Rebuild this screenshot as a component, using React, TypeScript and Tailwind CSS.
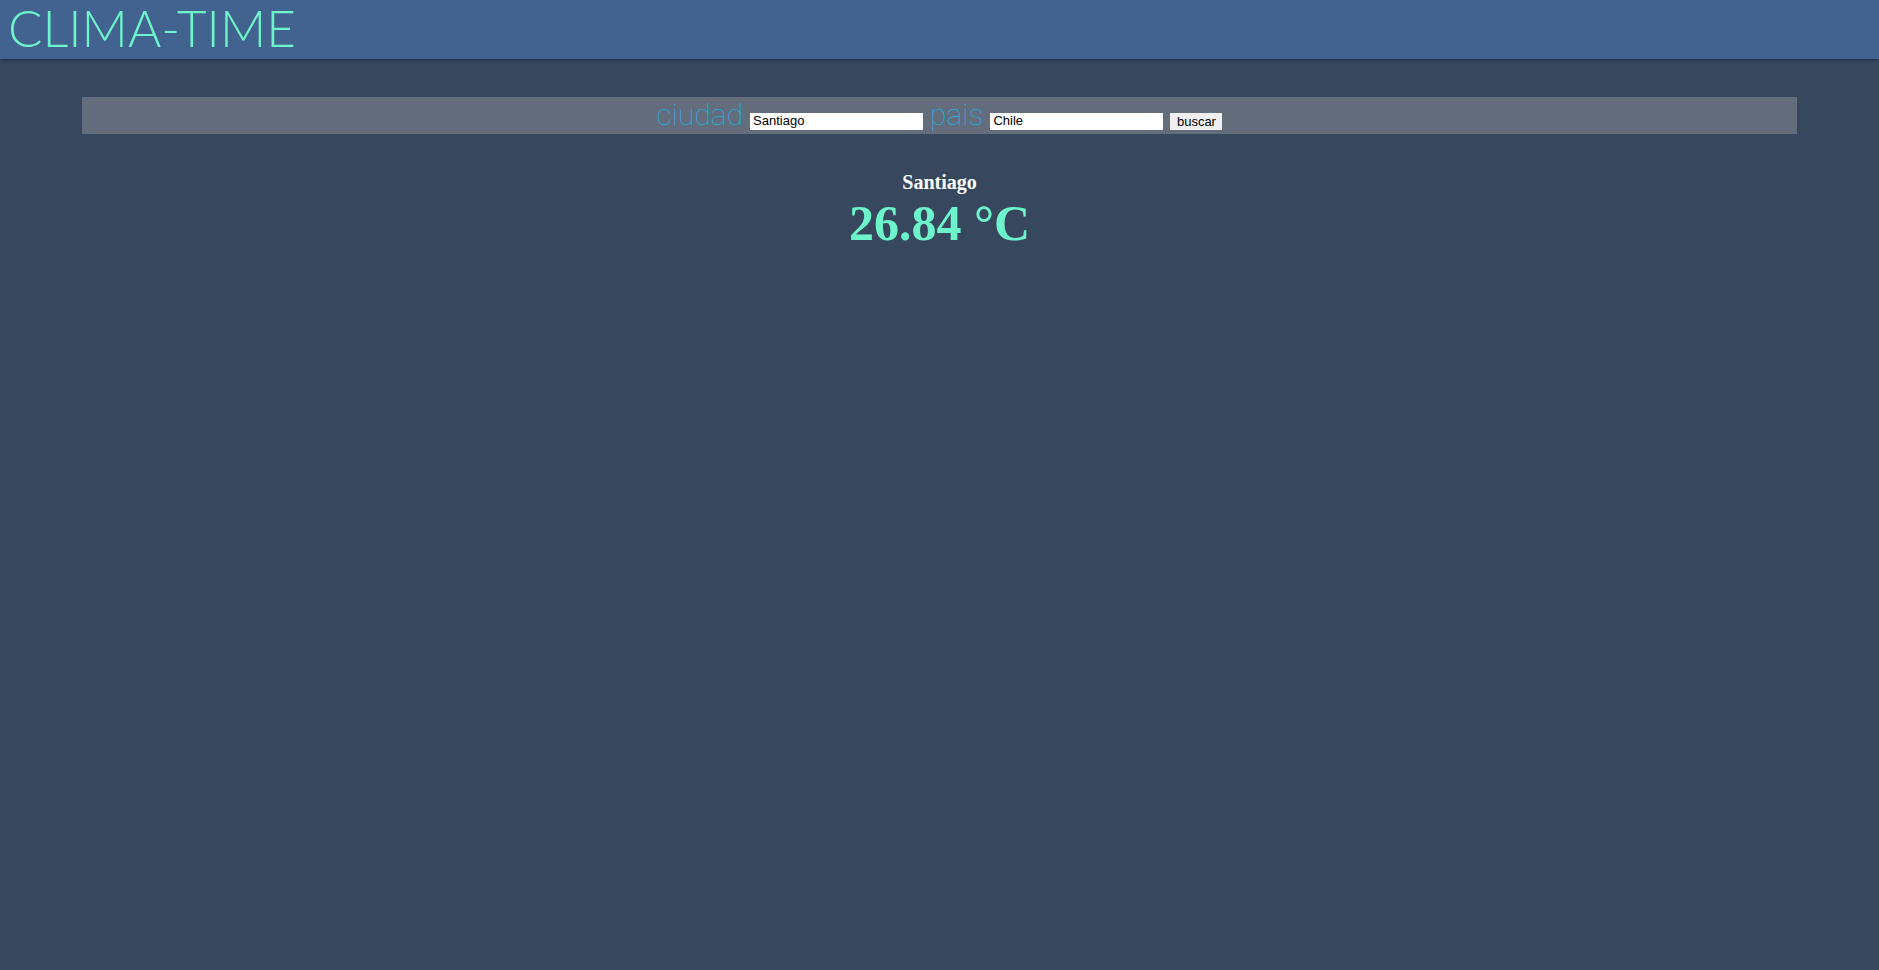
import React from "react"

export default function App() {
  return (
    <div className="min-h-[970px] bg-[#37475e]">
      <header className="h-[59px] bg-[#42628f] shadow-[0_1px_3px_rgba(0,0,0,0.35)]">
        <h1 className="pl-[8px] text-[51px] leading-[56px] font-light text-[#6ef4ca] [font-family:Lato,'Open_Sans',sans-serif]">
          CLIMA-TIME
        </h1>
      </header>

      <main className="px-[82px] pt-[38px]">
        <form
          className="flex h-[37px] items-center justify-center gap-[7px] bg-[#636d7c]"
          onSubmit={(e) => e.preventDefault()}
        >
          <label className="text-[30px] leading-[30px] font-thin text-[#20b0e2] [font-family:Roboto,sans-serif] -mt-[1px]">
            ciudad
          </label>
          <input
            defaultValue="Santiago"
            className="mt-[11px] h-[17px] w-[173px] bg-white px-[3px] text-[13px] text-black outline-none [font-family:'Liberation_Sans',Arial,sans-serif]"
          />
          <label className="text-[30px] leading-[30px] font-thin text-[#20b0e2] [font-family:Roboto,sans-serif] -mt-[1px]">
            pais
          </label>
          <input
            defaultValue="Chile"
            className="mt-[11px] h-[17px] w-[173px] bg-white px-[3px] text-[13px] text-black outline-none [font-family:'Liberation_Sans',Arial,sans-serif]"
          />
          <button
            type="submit"
            className="mt-[11px] h-[17px] w-[52px] bg-[#efefef] text-[13px] leading-[17px] text-black [font-family:'Liberation_Sans',Arial,sans-serif]"
          >
            buscar
          </button>
        </form>

        <section className="pt-[37px] text-center [font-family:'Liberation_Serif','Times_New_Roman',serif]">
          <h3 className="text-[20px] leading-[22px] font-bold text-white">Santiago</h3>
          <p className="mt-[3px] text-[50px] leading-[55px] font-bold text-[#6ef4ca]">26.84 °C</p>
        </section>
      </main>
    </div>
  )
}
